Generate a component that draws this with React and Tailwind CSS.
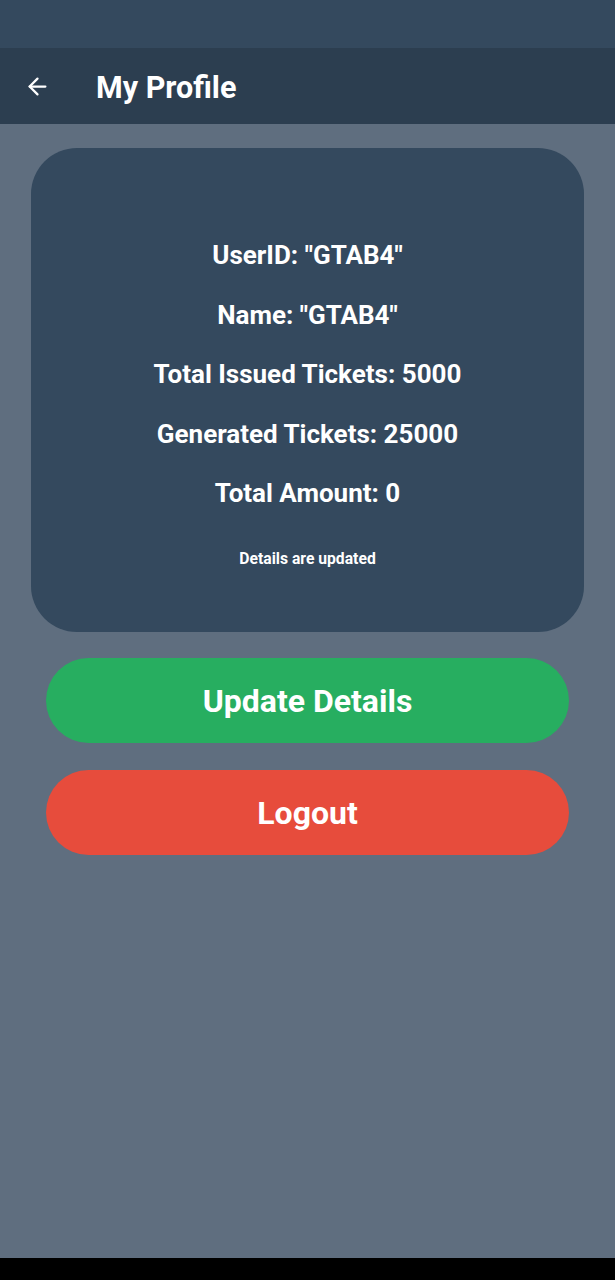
import { ArrowLeft } from "lucide-react";

function InfoLine({ children }) {
  return <p className="text-[26px] leading-[31px] font-bold text-white">{children}</p>;
}

export default function App() {
  return (
    <div
      className="w-[615px] h-[1280px] flex flex-col bg-[#5f6e7f]"
      style={{ fontFamily: "Roboto, 'Noto Sans', sans-serif" }}
    >
      <div className="h-[48px] bg-[#34495e]" />
      <div className="h-[76px] bg-[#2c3e50] flex items-center">
        <ArrowLeft className="ml-[24px] text-white" size={27} strokeWidth={2} />
        <h1 className="ml-[45px] mt-[4px] text-[30.5px] leading-[36px] font-bold text-white">
          My Profile
        </h1>
      </div>

      <div className="flex-1 px-[31px] pt-[24px]">
        <div className="h-[484px] rounded-[46px] bg-[#34495e] flex flex-col items-center pt-[92px]">
          <div className="flex flex-col items-center gap-[28.5px]">
            <InfoLine>UserID: "GTAB4"</InfoLine>
            <InfoLine>Name: "GTAB4"</InfoLine>
            <InfoLine>Total Issued Tickets: 5000</InfoLine>
            <InfoLine>Generated Tickets: 25000</InfoLine>
            <InfoLine>Total Amount: 0</InfoLine>
          </div>
          <p className="mt-[40px] text-[15.7px] leading-[19px] font-bold text-white">
            Details are updated
          </p>
        </div>

        <div className="mx-[15px] mt-[26px] flex flex-col gap-[27px]">
          <button
            type="button"
            className="h-[85px] rounded-full bg-[#27ae60] text-white text-[32px] font-bold"
          >
            Update Details
          </button>
          <button
            type="button"
            className="h-[85px] rounded-full bg-[#e74c3c] text-white text-[32px] font-bold"
          >
            Logout
          </button>
        </div>
      </div>

      <div className="h-[22px] bg-black" />
    </div>
  );
}
